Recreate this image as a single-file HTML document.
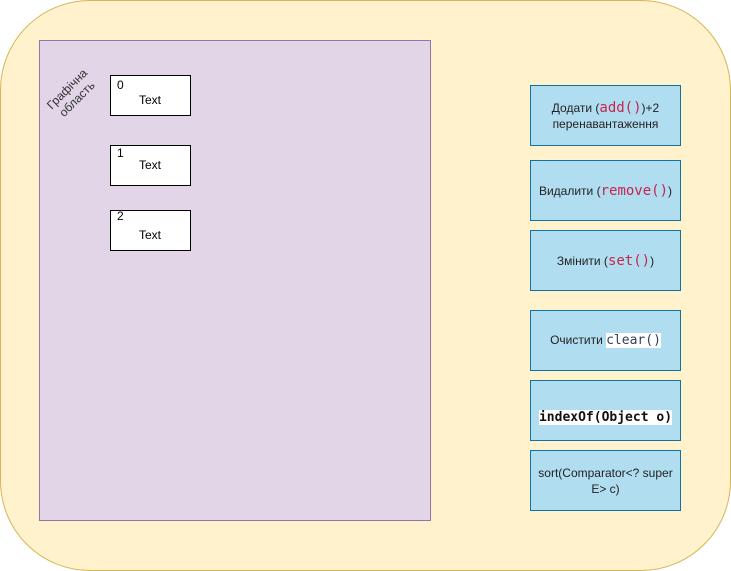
<!DOCTYPE html>
<html><head><meta charset="utf-8"><style>
body{margin:0;width:731px;height:571px;background:#fff;position:relative;font-family:"Liberation Sans",sans-serif;overflow:hidden}
.outer{position:absolute;left:0;top:0;width:729px;height:569px;border:1px solid #d6b656;background:#fff2cc;border-radius:90px}
.area{position:absolute;left:39px;top:40px;width:390px;height:479px;border:1px solid #9673a6;background:#e1d5e7}
.lbl{position:absolute;left:32px;top:80px;width:80px;font-size:12px;color:#333;text-align:center;line-height:14px;transform:rotate(-45deg)}
.box{position:absolute;left:110px;width:79px;height:39px;border:1px solid #000;background:#fff;font-size:12px}
.box .n{position:absolute;left:6px;top:2px}
.box .t{position:absolute;left:28px;top:17px}
.btn{position:absolute;left:530px;width:149px;height:59px;border:1px solid #10739e;background:#b1ddf0;font-size:12px;color:#222;display:flex;align-items:center;justify-content:center;text-align:center;line-height:16px}
code{font-family:"DejaVu Sans Mono",monospace;font-size:14px;color:#c7254e}
.w{font-family:"DejaVu Sans Mono",monospace;font-size:13px;background:#fff;color:#333}
</style></head><body>
<div class="outer"></div>
<div class="area"></div>
<div class="lbl">Графічна<br>область</div>
<div class="box" style="top:75px"><span class="n">0</span><span class="t">Text</span></div>
<div class="box" style="top:145px"><span class="n" style="top:0">1</span><span class="t" style="top:12px">Text</span></div>
<div class="box" style="top:210px"><span class="n" style="top:-2px">2</span><span class="t" style="top:17px">Text</span></div>
<div class="btn" style="top:85px"><div>Додати (<code>add()</code>)+2<br>перенавантаження</div></div>
<div class="btn" style="top:160px"><div>Видалити (<code>remove()</code>)</div></div>
<div class="btn" style="top:230px"><div>Змінити (<code>set()</code>)</div></div>
<div class="btn" style="top:310px"><div>Очистити <span class="w" style="color:#345">clear()</span></div></div>
<div class="btn" style="top:380px"><div style="padding-top:14px"><span class="w" style="color:#111;font-weight:bold">indexOf(Object o)</span></div></div>
<div class="btn" style="top:450px"><div>sort(Comparator&lt;? super<br>E&gt; c)</div></div>
</body></html>
